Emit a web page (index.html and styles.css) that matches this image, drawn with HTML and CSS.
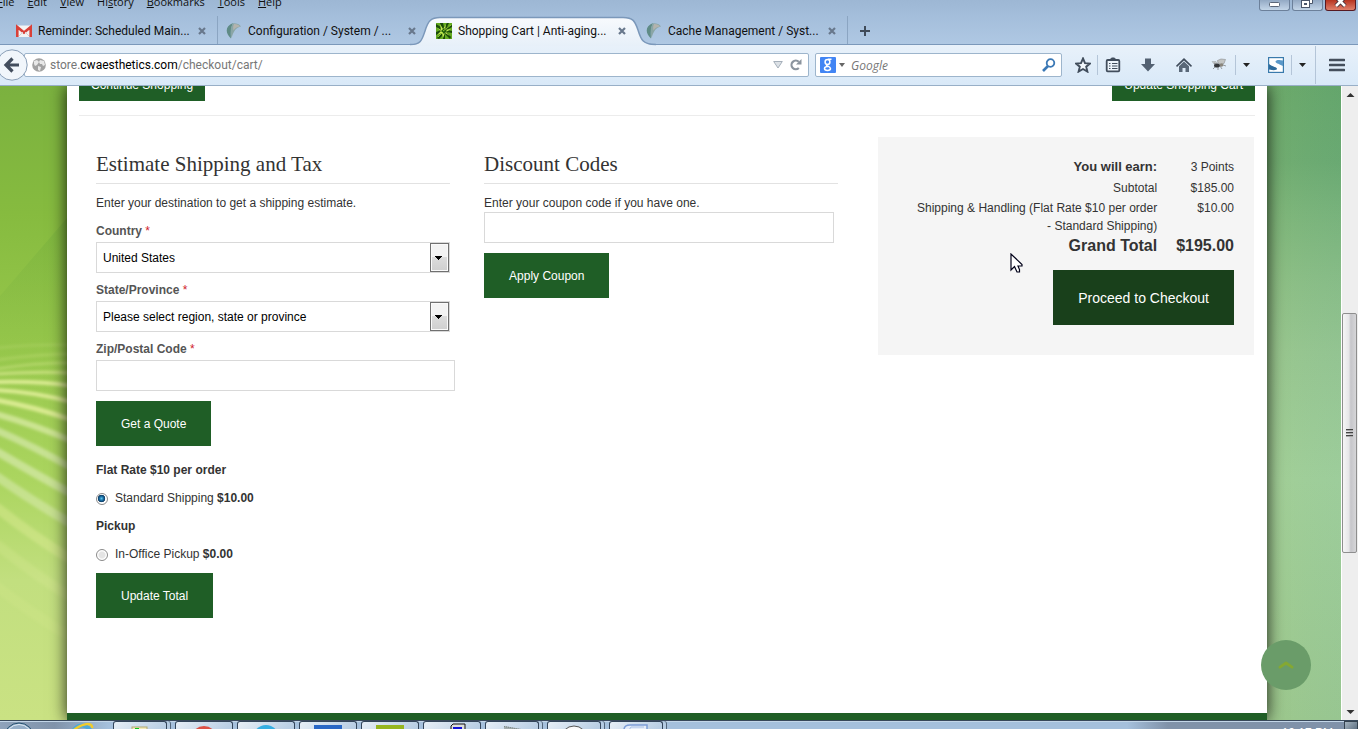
FILE: index.html
```html
<!DOCTYPE html>
<html lang="en">
<head>
<meta charset="utf-8">
<title>Shopping Cart | Anti-aging</title>
<link rel="stylesheet" href="styles.css">
</head>
<body>
<div class="browser">
  <header class="titlebar">
    <nav class="menubar" aria-label="Menu bar">
      <button class="menu-item"><u>F</u>ile</button>
      <button class="menu-item"><u>E</u>dit</button>
      <button class="menu-item"><u>V</u>iew</button>
      <button class="menu-item">Hi<u>s</u>tory</button>
      <button class="menu-item"><u>B</u>ookmarks</button>
      <button class="menu-item"><u>T</u>ools</button>
      <button class="menu-item"><u>H</u>elp</button>
    </nav>
    <div class="window-controls">
      <button class="win-btn" aria-label="Minimize"><svg width="29" height="11" viewBox="0 0 29 11"><rect x="9.500" y="2.500" width="10" height="4" rx="1" fill="#fff" stroke="#5a6679"/></svg></button>
      <button class="win-btn" aria-label="Restore"><svg width="29" height="11" viewBox="0 0 29 11"><path d="M12.500 -2V3.500H19.500V-2" fill="#fff" stroke="#4a566b"/><rect x="8.500" y=".5" width="8" height="7" fill="#fff" stroke="#4a566b"/><rect x="11.500" y="3.500" width="2" height="1" fill="#fff" stroke="#4a566b"/></svg></button>
      <button class="win-btn win-close" aria-label="Close"><svg width="29" height="11" viewBox="0 0 29 11"><path d="M10-3L19 6M19-3L10 6" stroke="#4a3038" stroke-width="4.500"/><path d="M10-3L19 6M19-3L10 6" stroke="#fff" stroke-width="2.600"/></svg></button>
    </div>
  </header>

  <div class="tabstrip" role="tablist">
    <div class="tab divided" role="tab">
      <svg class="fav" viewBox="0 0 16 16"><rect y="2.500" width="16" height="11.500" rx="1" fill="#f4f4f4"/><path d="M1.300 14V4L8 9.500 14.700 4V14" fill="none" stroke="#d94038" stroke-width="2.600"/><path d="M3 13l4-4M13 13L9 9" stroke="#d8d0d0"/></svg>
      <span class="tab-title">Reminder: Scheduled Main...</span>
      <button class="tab-close" aria-label="Close tab"><svg width="8" height="8" viewBox="0 0 8 8"><path d="M1 1l6 6M7 1L1 7" stroke="#68788c" stroke-width="2.200"/></svg></button>
    </div>
    <div class="tab" role="tab">
      <svg class="fav" viewBox="0 0 16 16"><path d="M5 15.500C-1 10 -1 3 7 0 5 5 4.500 10 5 15.500z" fill="#5f8b86"/><path d="M7 .3C10 0 13.500 1 15 3.500 10 4.500 7.500 8 5.500 15.500 4 9 4.500 4 7 .3z" fill="#8aa6a6"/><path d="M8 1C11 .8 13 2 14 3.500 11 4 9 5 7.500 7.500 7 5 7 3 8 1z" fill="#b3b3ae"/></svg>
      <span class="tab-title">Configuration / System / ...</span>
      <button class="tab-close" aria-label="Close tab"><svg width="8" height="8" viewBox="0 0 8 8"><path d="M1 1l6 6M7 1L1 7" stroke="#68788c" stroke-width="2.200"/></svg></button>
    </div>
    <div class="tab active" role="tab" aria-selected="true">
      <svg class="tab-shape" viewBox="0 0 246 30"><defs><linearGradient id="tg" x1="0" y1="0" x2="0" y2="1"><stop offset="0" stop-color="#f7fafd"/><stop offset="1" stop-color="#e7f0f9"/></linearGradient></defs><path d="M0 30V29C11 29 12 24 15 15 18 5 21 1.500 30 1.500H213C223 1.500 225 5 228 14 231 24 233 29 246 29V30z" fill="url(#tg)"/><path d="M0 28.500C11 28.500 12 24 15 15 18 5 21 1.500 30 1.500H213C223 1.500 225 5 228 14 231 24 233 28.500 246 28.500" fill="none" stroke="#7b98ba" stroke-width="1.500"/></svg>
      <svg class="fav" viewBox="0 0 16 16"><rect width="16" height="16" fill="#63aa20"/><path d="M0 1l5 3-1-4h3l1 4 3-4h2l-2 4 5-2v2l-5 3 5 1v2l-5-1 4 5-1 2-5-5 0 5H7l0-4-4 4-2-1 4-5-5 2V9l5-2-5-3z" fill="#1b4b09"/><path d="M4 1l3 5 3-5-1 6 6-1-5 3 4 4-5-3-2 5-1-5-5 2 4-4-5-4 5 3z" fill="#c4ec55"/><path d="M8 5l3 3-3 3-3-3z" fill="#225f0c"/><path d="M7 8l8-6M2 14l5-5" stroke="#a6dc38" stroke-width=".8"/></svg>
      <span class="tab-title">Shopping Cart | Anti-aging...</span>
      <button class="tab-close" aria-label="Close tab"><svg width="8" height="8" viewBox="0 0 8 8"><path d="M1 1l6 6M7 1L1 7" stroke="#68788c" stroke-width="2.200"/></svg></button>
    </div>
    <div class="tab divided" role="tab">
      <svg class="fav" viewBox="0 0 16 16"><path d="M5 15.500C-1 10 -1 3 7 0 5 5 4.500 10 5 15.500z" fill="#5f8b86"/><path d="M7 .3C10 0 13.500 1 15 3.500 10 4.500 7.500 8 5.500 15.500 4 9 4.500 4 7 .3z" fill="#8aa6a6"/><path d="M8 1C11 .8 13 2 14 3.500 11 4 9 5 7.500 7.500 7 5 7 3 8 1z" fill="#b3b3ae"/></svg>
      <span class="tab-title">Cache Management / Syst...</span>
      <button class="tab-close" aria-label="Close tab"><svg width="8" height="8" viewBox="0 0 8 8"><path d="M1 1l6 6M7 1L1 7" stroke="#68788c" stroke-width="2.200"/></svg></button>
    </div>
    <button class="new-tab" aria-label="New tab"><svg width="10" height="10" viewBox="0 0 10 10"><path d="M5 0v10M0 5h10" stroke="#3f4b59" stroke-width="2"/></svg></button>
  </div>

  <div class="toolbar">
    <button class="back" aria-label="Back"><svg width="28" height="32" viewBox="0 0 28 32"><circle cx="12" cy="16" r="15.200" fill="#f1f6fb" stroke="#8a9fb7"/><path d="M12.500 9.500L6 16l6.500 6.500M7 16H19" fill="none" stroke="#434e5e" stroke-width="3.200"/></svg></button>
    <div class="urlbar">
      <svg width="14" height="14" viewBox="0 0 14 14"><circle cx="7" cy="7" r="6.800" fill="#a2a2a2"/><path d="M2 3l3-1 2 2-2 3-2 1-1-2zM8 2l4 1 1 4-2 1-1-2-2 0-1-2zM6 8l3 1-1 4-2-1z" fill="#e8e8e8"/></svg>
      <div class="url"><span>store.</span><strong>cwaesthetics.com</strong><span>/checkout/cart/</span></div>
      <svg width="10" height="8" viewBox="0 0 10 8"><path d="M.7.500H9.300L5 7z" fill="#dce1e6" stroke="#a5afba"/></svg>
      <button class="reload" aria-label="Reload"><svg width="12" height="12" viewBox="0 0 12 12"><path d="M8.800 9A4.300 4.300 0 1 1 8.800 2.800" fill="none" stroke="#8b949e" stroke-width="2.200"/><path d="M11.500 0V5.500H6z" fill="#8b949e"/></svg></button>
    </div>
    <div class="searchbar">
      <svg width="16" height="16" viewBox="0 0 16 16"><rect width="16" height="16" rx="1" fill="#4285f4"/><g fill="none" stroke="#fff" stroke-width="1.500"><ellipse cx="7.500" cy="5" rx="2.400" ry="2.500"/><path d="M8 2.300H11.500M7 7.500C5 9 10.500 9 10.500 11.500 10.500 14 4.500 14 4.500 11.500 4.500 10 6 9.500 8 9.500"/></g></svg>
      <svg width="6" height="4" viewBox="0 0 6 4"><path d="M0 0H6L3 4z" fill="#666"/></svg>
      <input class="search-input" type="text" placeholder="Google" aria-label="Search">
      <svg width="14" height="14" viewBox="0 0 14 14"><circle cx="8.500" cy="5" r="3.800" fill="none" stroke="#3a78b5" stroke-width="1.800"/><path d="M6 8L1 13" stroke="#3a78b5" stroke-width="2.600"/></svg>
    </div>
    <div class="tools">
      <button class="tool edge" aria-label="Bookmark"><svg width="16" height="16" viewBox="0 0 16 16"><path d="M8 1.500l2 4.600 5 .4-3.800 3.200 1.200 4.900L8 12l-4.400 2.600 1.200-4.900L1 6.500l5-.4z" fill="#f2f7fc" stroke="#414d5c" stroke-width="1.900"/></svg></button>
      <button class="tool" aria-label="Bookmarks list"><svg width="16" height="16" viewBox="0 0 16 16"><rect x="1.700" y="3" width="12.600" height="11.300" rx="1" fill="#edf4fb" stroke="#414d5c" stroke-width="1.800"/><path d="M5 3l1.500-2h3L11 3z" fill="#414d5c" stroke="#414d5c"/><path d="M4 6.500h1.500M7 6.500h5.500M4 9h1.500M7 9h5.500M4 11.500h1.500M7 11.500h5.500" stroke="#414d5c" stroke-width="1.200"/></svg></button>
      <button class="tool wide spaced" aria-label="Downloads"><svg width="16" height="16" viewBox="0 0 16 16"><path d="M5 1.500h6V7h4L8 14.500 1 7h4z" fill="#536172"/></svg></button>
      <button class="tool wide" aria-label="Home"><svg width="16" height="16" viewBox="0 0 16 16"><path d="M0 8.800L8 1l8 7.800-1 1.200-7-6.500L1 10z" fill="#414d5c"/><path d="M3 9.200l5-4.700 5 4.700V15H9.500v-4h-3v4H3z" fill="#5a6878"/></svg></button>
      <button class="tool bug edge" aria-label="Firebug"><svg width="16" height="16" viewBox="0 0 16 16"><path d="M7 6L6.500 3.500 10 2l4.500.5-1.500 4-3 1z" fill="#c3c5c4" stroke="#898d8f" stroke-width=".6"/><path d="M1 4.500l4 0 2 3-4-.5z" fill="#c3c7c9" stroke="#95999b" stroke-width=".4"/><ellipse cx="6" cy="8.500" rx="3" ry="2" fill="#34363a"/><circle cx="10.500" cy="8" r="1.800" fill="#8a867c"/><path d="M4 10l-2 2M7 10v3M9 9l2 3M12 8l3 1M5 7L3 6" stroke="#74777a" stroke-width=".7"/></svg></button>
      <button class="tool narrow" aria-label="Firebug menu"><svg width="7" height="4" viewBox="0 0 7 4"><path d="M0 0H7L3.500 4z" fill="#222"/></svg></button>
      <button class="tool boxed edge" aria-label="S extension"><svg width="16" height="16" viewBox="0 0 16 16"><rect width="16" height="16" fill="#397aac"/><rect x="1.200" y="1.200" width="13.600" height="13.600" fill="#fff"/><path d="M15 3.500C11 2.500 7.500 3 7.500 4.500S10 6.500 15 9z" fill="#5a98c9"/><path d="M1 7C4 9.500 9 10 9 11.700S5 13.500 1 12.500z" fill="#2e6b9c"/></svg></button>
      <button class="tool narrow" aria-label="S extension menu"><svg width="7" height="4" viewBox="0 0 7 4"><path d="M0 0H7L3.500 4z" fill="#222"/></svg></button>
      <button class="tool app-menu" aria-label="Open menu"><svg width="16" height="14" viewBox="0 0 16 14"><path d="M1 2h14M1 7h14M1 12h14" stroke="#454f5c" stroke-width="2.600" stroke-linecap="round"/></svg></button>
    </div>
  </div>

  <div class="viewport">
    <div class="scene">
      <svg class="backdrop left" viewBox="0 0 67 634" preserveAspectRatio="none">
        <defs>
          <linearGradient id="lg" x1="0" y1="0" x2="0" y2="1"><stop offset="0" stop-color="#7bb13f"/><stop offset=".2" stop-color="#86bb3f"/><stop offset=".42" stop-color="#98c84c"/><stop offset=".62" stop-color="#abd55f"/><stop offset=".78" stop-color="#c2df7f"/><stop offset="1" stop-color="#cae283"/></linearGradient>
          <linearGradient id="fold" x1="0" y1="0" x2="0" y2="1"><stop offset="0" stop-color="#74ad3c" stop-opacity=".5"/><stop offset="1" stop-color="#8fc24a" stop-opacity="0"/></linearGradient>
          <filter id="soft"><feGaussianBlur stdDeviation="1.700"/></filter>
        </defs>
        <rect width="67" height="634" fill="url(#lg)"/>
        <path d="M0 210L67 132V310H0z" fill="url(#fold)"/>
        <g fill="none" stroke="#e8f2a0" filter="url(#soft)">
          <path d="M-4 262Q40 258 72 259" opacity=".2" stroke-width="2"/>
          <path d="M-4 274Q40 268 72 268" opacity=".3" stroke-width="2"/>
          <path d="M-4 283Q40 276 72 277" opacity=".5" stroke-width="2"/>
          <path d="M-4 288Q40 285 72 287" opacity=".6" stroke-width="3"/>
          <path d="M-4 296Q40 295 72 300" opacity=".85" stroke-width="4"/>
          <path d="M-4 304Q35 306 72 316" opacity=".85" stroke-width="4"/>
          <path d="M-4 314Q35 321 72 334" opacity=".8" stroke-width="5"/>
          <path d="M-4 328Q35 339 72 355" opacity=".65" stroke-width="6" stroke="#e2efb0"/>
          <path d="M-4 344Q35 361 72 382" opacity=".6" stroke-width="7" stroke="#deedb8"/>
          <path d="M-4 365Q35 388 72 408" opacity=".6" stroke-width="8" stroke="#deedb8"/>
          <path d="M-4 390Q35 417 72 438" opacity=".5" stroke-width="9" stroke="#deedb8"/>
          <path d="M-4 421Q35 452 72 474" opacity=".35" stroke-width="10"/>
          <path d="M-4 458Q35 489 72 512" opacity=".2" stroke-width="10"/>
          <path d="M-4 500Q35 530 72 552" opacity=".12" stroke-width="10"/>
        </g>
      </svg>
      <svg class="backdrop right" viewBox="0 0 74 634" preserveAspectRatio="none">
        <defs>
          <linearGradient id="rg" x1="0" y1="0" x2="0" y2="1"><stop offset="0" stop-color="#65a569"/><stop offset=".12" stop-color="#6ba970"/><stop offset=".2" stop-color="#7ab37a"/><stop offset=".3" stop-color="#8abd86"/><stop offset=".42" stop-color="#98c692"/><stop offset=".62" stop-color="#a3d09c"/><stop offset="1" stop-color="#9dc891"/></linearGradient>
          <linearGradient id="rh"><stop offset="0" stop-color="#a8cd70" stop-opacity=".14"/><stop offset="1" stop-color="#5aab90" stop-opacity=".08"/></linearGradient>
        </defs>
        <rect width="74" height="634" fill="url(#rg)"/><rect width="74" height="634" fill="url(#rh)"/>
      </svg>
      <main class="page">
        <div class="content">
          <div class="cart-actions">
            <button class="btn small">Continue Shopping</button>
            <button class="btn small">Update Shopping Cart</button>
          </div>
          <div class="collaterals">
            <form class="column">
              <h2>Estimate Shipping and Tax</h2>
              <p>Enter your destination to get a shipping estimate.</p>
              <label class="field-label" for="country">Country <em>*</em></label>
              <div class="select-box"><select id="country"><option>United States</option></select></div>
              <label class="field-label" for="region">State/Province <em>*</em></label>
              <div class="select-box"><select id="region"><option>Please select region, state or province</option></select></div>
              <label class="field-label" for="zip">Zip/Postal Code <em>*</em></label>
              <input class="text-input zip" id="zip" type="text">
              <button class="btn" type="button">Get a Quote</button>
              <div class="rates">
                <strong>Flat Rate $10 per order</strong>
                <label class="rate"><input type="radio" name="rate" checked><span>Standard Shipping <b>$10.00</b></span></label>
                <strong>Pickup</strong>
                <label class="rate"><input type="radio" name="rate"><span>In-Office Pickup <b>$0.00</b></span></label>
              </div>
              <button class="btn" type="button">Update Total</button>
            </form>
            <form class="column">
              <h2>Discount Codes</h2>
              <label class="coupon-label" for="coupon">Enter your coupon code if you have one.</label>
              <input class="text-input coupon" id="coupon" type="text">
              <button class="btn" type="button">Apply Coupon</button>
            </form>
            <section class="totals">
              <table>
                <tbody>
                  <tr class="earn"><th scope="row">You will earn:</th><td>3 Points</td></tr>
                  <tr><th scope="row">Subtotal</th><td>$185.00</td></tr>
                  <tr class="shipping"><th scope="row">Shipping &amp; Handling (Flat Rate $10 per order - Standard Shipping)</th><td>$10.00</td></tr>
                  <tr class="grand"><th scope="row">Grand Total</th><td>$195.00</td></tr>
                </tbody>
              </table>
              <button class="btn checkout">Proceed to Checkout</button>
            </section>
          </div>
        </div>
        <footer class="page-footer"></footer>
      </main>
      <button class="to-top" aria-label="Back to top"><svg width="16" height="8" viewBox="0 0 16 8"><path d="M2 6.200L8 2l6 4.200" fill="none" stroke="#84a832" stroke-width="2.800" stroke-linecap="round" stroke-linejoin="round"/></svg></button>
    </div>
    <div class="scrollbar">
      <svg class="arrow" viewBox="0 0 16 17"><path d="M4.500 11L8.500 7l4 4z" fill="#333"/></svg>
      <div class="track"><div class="thumb"><i></i><i></i><i></i></div></div>
      <svg class="arrow" viewBox="0 0 16 17"><path d="M4.500 7L8.500 11l4-4z" fill="#333"/></svg>
    </div>
    <svg class="cursor" width="13" height="20" viewBox="0 0 13 20"><path d="M1 1V17L4.500 13.500 7 19H9.500V16.500L8 13H12V11.500z" fill="#fff" stroke="#000018" stroke-width="1.200"/></svg>
  </div>

  <footer class="taskbar">
    <div class="launch">
      <svg width="38" height="8" viewBox="0 0 38 8"><circle cx="19" cy="17" r="15" fill="#96afc8" stroke="#24506f"/><circle cx="19" cy="17" r="13.500" fill="none" stroke="#dfebf5"/></svg>
      <svg width="28" height="8" viewBox="0 0 28 8"><circle cx="12" cy="14" r="9.500" fill="none" stroke="#4fa9d8" stroke-width="4"/><path d="M4 9C12 2 23 1 22 7" fill="none" stroke="#f2cc2a" stroke-width="2.500"/></svg>
    </div>
    <button class="task stack" aria-label="Explorer"><svg width="20" height="8" viewBox="0 0 20 8"><rect x="2" y="5" width="15" height="6" fill="#f1e9b7" stroke="#b1a975"/><path d="M5 6h4v2H5z" fill="#09c41a"/></svg></button>
    <button class="task" aria-label="Chrome"><svg width="24" height="8" viewBox="0 0 24 8"><circle cx="12" cy="17" r="13" fill="#dc5044"/></svg></button>
    <button class="task" aria-label="Messenger"><svg width="24" height="8" viewBox="0 0 24 8"><circle cx="12" cy="16" r="13" fill="#35aee2"/></svg></button>
    <button class="task" aria-label="Mail"><svg width="28" height="8" viewBox="0 0 28 8"><rect y="3" width="28" height="5" fill="#2967c5"/></svg></button>
    <button class="task" aria-label="Video"><svg width="28" height="8" viewBox="0 0 28 8"><rect y="3" width="28" height="5" fill="#96b51f"/></svg></button>
    <button class="task" aria-label="Calculator"><svg class="nudge" width="16" height="8" viewBox="0 0 16 8"><path d="M1 8V4l2-2h12v6" fill="#ddd" stroke="#111"/><rect x="3" y="5" width="9" height="4" fill="#1010d8"/></svg></button>
    <button class="task stack" aria-label="Notes"><svg width="20" height="8" viewBox="0 0 20 8"><path d="M2 4l17 3v3H2z" fill="#a4aeae"/><path d="M2 4.500l17 3" stroke="#788484" stroke-dasharray="1 1"/></svg></button>
    <button class="task stack" aria-label="Firefox"><svg width="24" height="8" viewBox="0 0 24 8"><circle cx="12" cy="17" r="13" fill="#fafafa" stroke="#555"/></svg></button>
    <button class="task stack" aria-label="Documents"><svg width="26" height="8" viewBox="0 0 26 8"><path d="M1 8C1 5 3 3 7 3h17v6" fill="#e5edf8" stroke="#7c9dd6" stroke-width="1.500"/><path d="M6 8l2-3h13" stroke="#a7bfe5" fill="none"/></svg></button>
    <div class="tray"><time>10:17 PM</time><button class="show-desktop" aria-label="Show desktop"></button></div>
  </footer>
</div>
</body>
</html>
```
FILE: styles.css
```css
* { box-sizing: border-box; }
html, body { height: 100%; }
body {
  margin: 0;
  overflow: hidden;
  font: 12px/18px "Liberation Sans", Arial, sans-serif;
  color: #333;
}
button { margin: 0; padding: 0; border: 0; background: none; font: inherit; color: inherit; }
svg { display: block; flex: none; }

.browser { display: flex; flex-direction: column; height: 100vh; background: #b0c8e2; }

/* title bar */
.titlebar {
  display: flex;
  justify-content: space-between;
  height: 16px;
  background: linear-gradient(#9db7d4, #a4bedb);
}
.menubar { color: #111; font-family: "Open Sans", "Noto Sans", sans-serif; }
.tabstrip, .toolbar { color: #111; font-family: Roboto, "Open Sans", sans-serif; }
.menubar { display: flex; align-items: flex-end; gap: 13px; height: 10px; overflow: hidden; font-size: 11px; }
.menu-item { line-height: 16px; }
.menu-item:first-child { margin-left: -3px; }
.window-controls { display: flex; gap: 2px; padding-right: 2px; }
.win-btn {
  width: 31px;
  height: 11px;
  border: 1px solid #6c809a;
  border-top: 0;
  border-radius: 0 0 3px 3px;
  background: linear-gradient(#93a9c4, #c3d5e8);
  overflow: hidden;
}
.win-close { background: linear-gradient(#b63320, #e0806c); border-color: #571a22; }

/* tabs */
.tabstrip {
  display: flex;
  height: 28px;
  padding-left: 8px;
  background: linear-gradient(#a4bedb, #afc8e3);
}
.tab { position: relative; display: flex; align-items: center; gap: 6px; width: 210px; padding: 2px 12px 0 8px; }
.divided { border-right: 1px solid #8ba5c2; }
.fav { width: 16px; height: 16px; position: relative; }
.tab-title { position: relative; flex: 1; white-space: nowrap; font-size: 12px; min-width: 0; }
.tab-close { position: relative; }
.tab.divided { padding-right: 11px; }
.active { z-index: 1; }
.tab-shape { position: absolute; left: -18px; top: 0; width: 246px; height: 30px; }
.new-tab { padding: 2px 0 0 12px; }

/* toolbar */
.toolbar {
  display: flex;
  align-items: center;
  height: 42px;
  border-top: 1px solid #7b98ba;
  border-bottom: 1px solid #98afc7;
  background: linear-gradient(#e8f1fa, #d9e9f8);
}
.back { position: relative; z-index: 1; }
.urlbar, .searchbar {
  display: flex;
  align-items: center;
  height: 24px;
  border: 1px solid #9db5cc;
  border-radius: 2px;
  background: #fff;
}
.urlbar { flex: 1; gap: 4px; margin-left: -4px; padding: 0 6px 0 7px; }
.url { flex: 1; color: #777; }
.url strong { font-weight: 400; color: #000; }
.reload { margin-left: 3px; }
.searchbar { width: 247px; margin-left: 6px; padding: 0 5px 0 4px; gap: 3px; }
.search-input { flex: 1; min-width: 0; padding: 0 0 0 3px; border: 0; outline: 0; background: none; font: italic 12px "Open Sans", sans-serif; }
.search-input::placeholder { color: #777; opacity: 1; }
.tools { display: flex; align-items: center; margin-left: 6px; }
.tool { display: flex; align-items: center; justify-content: center; width: 30px; height: 20px; }
.edge { border-right: 1px solid #b4c5d8; }
.wide { width: 36px; }
.spaced { margin-left: 2px; }
.bug { width: 34px; }
.narrow { width: 20px; }
.boxed { margin-left: 4px; width: 32px; }
.app-menu { width: 43px; height: 38px; margin-left: 3px; border-left: 1px solid #b4c5d8; }

/* page area */
.viewport { position: relative; display: flex; flex: 1; min-height: 0; }
.scene { position: relative; flex: 1; overflow: hidden; background: #b5d67a; }
.backdrop { position: absolute; top: 0; height: 100%; }
.backdrop.left { left: 0; width: 67px; }
.backdrop.right { right: 0; width: 74px; }
.page {
  position: relative;
  display: flex;
  flex-direction: column;
  height: 100%;
  margin: 0 74px 0 67px;
  background: #fff;
  box-shadow: 0 0 16px rgba(0, 0, 0, .85);
}
.content { flex: 1; padding: 0 12px; }
.page-footer { height: 7px; background: #1f5e26; }
.cart-actions { display: flex; justify-content: space-between; align-items: flex-end; height: 15px; overflow: hidden; }
.btn {
  display: block;
  height: 45px;
  padding: 0 25px;
  background: #1f5e26;
  color: #fff;
}
.btn.small { height: 32px; padding: 0 12px; }
.collaterals {
  display: grid;
  grid-template-columns: 33% 33% 1fr;
  align-items: start;
  margin-top: 14px;
  padding-top: 21px;
  border-top: 1px solid #ececec;
}
.column { padding: 12px 17px 0; }
h2 {
  margin: 0 0 10px;
  padding-bottom: 4px;
  border-bottom: 1px solid #e2e2e2;
  font: 400 21px/30px "Liberation Serif", serif;
}
p { margin: 0; }
.field-label { display: block; margin: 8px 0 2px; font-weight: 700; color: #555; }
p + .field-label { margin-top: 10px; }
.field-label em { font-style: normal; font-weight: 400; color: #d0202a; }
.select-box { position: relative; height: 31px; }
.select-box::after {
  content: "";
  position: absolute;
  top: 1px;
  right: 1px;
  bottom: 1px;
  width: 17px;
  border: 1px solid #707070;
  background:
    linear-gradient(#000, #000) 4px 12px / 7px 1px no-repeat,
    linear-gradient(#000, #000) 5px 13px / 5px 1px no-repeat,
    linear-gradient(#000, #000) 6px 14px / 3px 1px no-repeat,
    linear-gradient(#000, #000) 7px 15px / 1px 1px no-repeat,
    linear-gradient(#f3f3f3 50%, #dcdcdc 50%, #cfcfcf);
  box-shadow: inset 0 0 0 1px #fafafa;
  pointer-events: none;
}
select {
  appearance: none;
  display: block;
  width: 100%;
  height: 31px;
  padding: 0 20px 0 6px;
  border: 1px solid #d9d9d9;
  border-radius: 0;
  background: #fff;
  font: inherit;
  color: #000;
}
.text-input { display: block; height: 31px; padding: 0 6px; border: 1px solid #d9d9d9; background: #fff; font: inherit; }
.zip { width: calc(100% + 5px); margin-bottom: 10px; }
.coupon { width: calc(100% - 4px); margin-bottom: 10px; }
.coupon-label { display: block; }
.rates { display: flex; flex-direction: column; gap: 10px; margin: 15px 0 10px; }
.rate { display: flex; align-items: center; gap: 7px; }
input[type="radio"] {
  appearance: none;
  width: 12px;
  height: 12px;
  margin: 2px 0 0;
  border: 1px solid #8a8a8a;
  border-radius: 50%;
  background: radial-gradient(#e4e4e4 40%, #fff 60%);
}
input[type="radio"]:checked { background: radial-gradient(circle at 45% 45%, #5fc6ee 0, #1a6fa5 25%, #0d3a63 45%, #fff 52%); }

.totals { display: flex; flex-direction: column; align-items: flex-end; gap: 14px; margin: 0 1px 0 23px; padding: 20px 20px 30px; background: #f5f5f5; }
table { width: 100%; border-collapse: collapse; text-align: right; }
th, td { padding: 1px 0; vertical-align: top; font-weight: 400; line-height: 18px; }
th { padding-left: 15px; text-align: right; }
td { padding-left: 19px; white-space: nowrap; }
tr { height: 20px; }
.earn { height: 21px; }
.earn th { font-size: 13px; font-weight: 700; }
.grand th, .grand td { font-size: 16px; font-weight: 700; }
.checkout { height: 55px; background: #19401b; font-size: 14px; }

.to-top {
  position: absolute;
  right: 30px;
  bottom: 30px;
  display: flex;
  align-items: center;
  justify-content: center;
  width: 50px;
  height: 50px;
  border-radius: 50%;
  background: #6a9c69;
}
.cursor { position: absolute; left: 1010px; top: 167px; }

/* scrollbar */
.scrollbar { display: flex; flex-direction: column; width: 17px; border-left: 1px solid #fff; background: #eee; }
.arrow { width: 16px; height: 17px; }
.track { position: relative; flex: 1; }
.thumb {
  position: absolute;
  top: 35%;
  right: 1px;
  left: 0;
  display: flex;
  flex-direction: column;
  align-items: center;
  justify-content: center;
  gap: 1px;
  height: 40%;
  border: 1px solid #8e8e8e;
  border-radius: 2px;
  background: linear-gradient(90deg, #f6f6f6, #e6e6e8 45%, #c6c6ca 60%, #d6d6d8);
}
.thumb i { width: 7px; height: 2px; border-top: 1px solid #444; background: #aaa; }

/* taskbar */
.taskbar {
  display: flex;
  gap: 4px;
  height: 9px;
  overflow: hidden;
  border-top: 1px solid #38485a;
  box-shadow: inset 0 1px #c3d6e8;
  background: linear-gradient(90deg, #8fa3bb 0, #8093aa 4%, #a5c0dc 8%, #a5c0dc 83%, #8092a9 86%);
}
.launch { display: flex; gap: 32px; width: 109px; }
.task {
  display: flex;
  justify-content: center;
  width: 58px;
  height: 10px;
  border: 1px solid #33455a;
  border-bottom: 0;
  border-radius: 3px 3px 0 0;
  background: linear-gradient(135deg, #e6eef6, #b4cbe2);
}
.stack { width: 54px; margin-right: 4px; box-shadow: 3px 0 0 #b4cbe2, 4px 0 0 #52657a; }
.nudge { margin-left: 12px; }
.tray { display: flex; flex: 1; justify-content: flex-end; gap: 11px; color: #fff; }
time { padding-top: 3px; white-space: nowrap; }
.show-desktop { width: 14px; height: 10px; border: 1px solid #34424f; background: linear-gradient(135deg, #a5b4c0, #5c6e80); }
```
